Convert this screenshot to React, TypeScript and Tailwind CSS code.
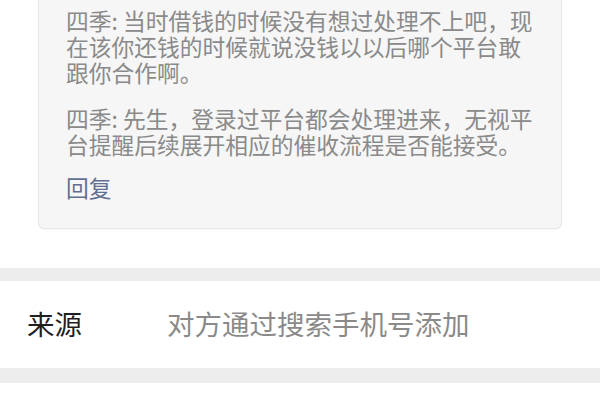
import React from 'react';

const comments = [
  '四季: 当时借钱的时候没有想过处理不上吧，现在该你还钱的时候就说没钱以以后哪个平台敢跟你合作啊。',
  '四季: 先生，登录过平台都会处理进来，无视平台提醒后续展开相应的催收流程是否能接受。',
];

export default function App() {
  return (
    <div
      className="w-[600px] h-[400px] overflow-hidden bg-white"
      style={{ fontFamily: '"Noto Sans CJK SC", "Noto Sans", sans-serif' }}
    >
      <div className="px-[38px]">
        <div className="rounded-b-md border border-t-0 border-[#e7e7e7] bg-[#f6f6f6] pl-[27px] pr-[24px] pt-[8px] pb-[27px] shadow-[0_1px_1px_rgba(0,0,0,0.03)]">
          {comments.map((c, i) => (
            <p
              key={i}
              className={`text-[22.75px] leading-[25.75px] text-[#8a8a8a] ${i > 0 ? 'mt-[21px]' : ''}`}
            >
              {c}
            </p>
          ))}
          <div className="mt-[17px] text-[22.75px] leading-[25.75px] text-[#617092]">回复</div>
        </div>
      </div>

      <div className="h-[39px]" />
      <div className="h-[13px] bg-[#ededed]" />

      <div className="flex h-[87px] items-center px-[27px]">
        <div className="w-[140px] text-[27.5px] text-[#1f1f1f]">来源</div>
        <div className="text-[27.5px] text-[#8a8a8a]">对方通过搜索手机号添加</div>
      </div>

      <div className="h-[15px] bg-[#ededed]" />
      <div className="h-[17px] bg-white" />
    </div>
  );
}
